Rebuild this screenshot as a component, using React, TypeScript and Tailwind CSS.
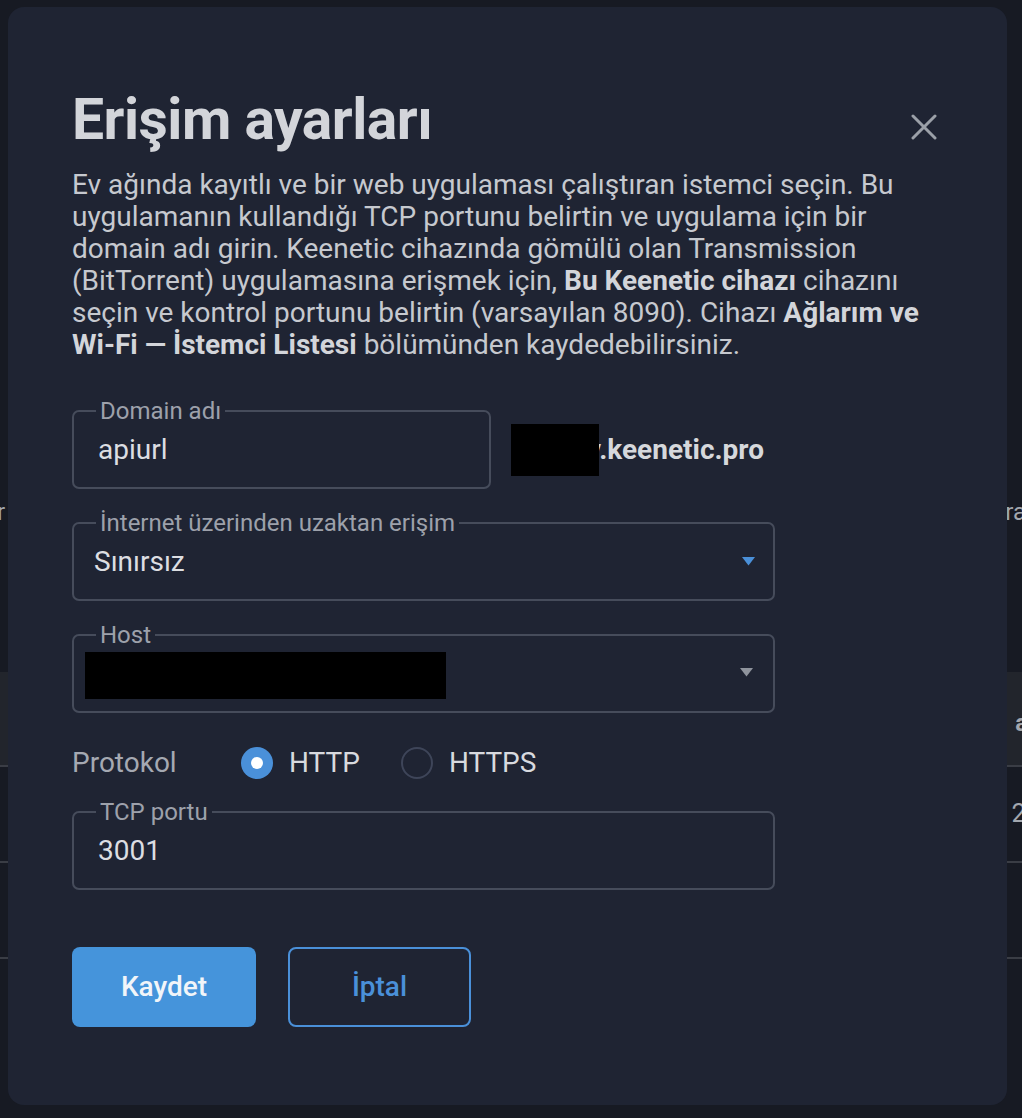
import React from "react";

function Field({
  label,
  children,
  className = "",
}: {
  label: string;
  children: React.ReactNode;
  className?: string;
}) {
  return (
    <fieldset
      className={
        "border-2 border-[#464c5b] rounded-[7px] px-0 pb-0 m-0 min-w-0 " + className
      }
    >
      <legend className="ml-[22px] px-[4px] text-[24px] leading-[24px] text-[#9da1ab]">
        {label}
      </legend>
      {children}
    </fieldset>
  );
}

function Caret({ color }: { color: string }) {
  return (
    <svg width="13" height="9" viewBox="0 0 13 9" className="shrink-0">
      <path d="M0 0 L13 0 L6.5 8.5 Z" fill={color} />
    </svg>
  );
}

export default function App() {
  return (
    <div className="relative w-[1022px] h-[1118px] overflow-hidden bg-[#171a23] font-['Roboto','Noto_Sans',sans-serif]">
      {/* page behind the dialog */}
      <div className="flex flex-col pt-[496px]">
        <div className="flex justify-between h-[32px] text-[24px] leading-[32px] text-[#a3a7ae]">
          <span className="-ml-[3px]">r</span>
          <span className="-mr-[4px]">ra</span>
        </div>
        <div className="h-[144px]" />
        <div className="flex justify-between items-center h-[95px] bg-[#22252c] border-b-2 border-[#3a3d45] text-[24px] font-bold text-[#a3a7ae]">
          <span />
          <span className="-mr-[6px] mt-[8px]">a</span>
        </div>
        <div className="flex justify-between items-start h-[96px] border-b-2 border-[#3a3d45] text-[26px] leading-[32px] text-[#a3a7ae]">
          <span />
          <span className="-mr-[4px] mt-[30px]">2</span>
        </div>
        <div className="h-[96px] border-b-2 border-[#3a3d45]" />
      </div>

      {/* dialog */}
      <div className="absolute left-[8px] top-[7px] w-[999px] h-[1098px] rounded-[16px] bg-[#1f2433] px-[64px] pt-[81px] flex flex-col">
        <div className="flex justify-between items-start">
          <h1 className="text-[57px] leading-[64px] font-bold text-[#d3d5da] tracking-[-0.5px]">
            Erişim ayarları
          </h1>
          <button className="mt-[26px] mr-[6px] w-[26px] h-[26px] flex items-center justify-center">
            <svg width="26" height="26" viewBox="0 0 26 26">
              <path
                d="M2 2 L24 24 M24 2 L2 24"
                stroke="#9ba0a8"
                strokeWidth="3"
                strokeLinecap="round"
              />
            </svg>
          </button>
        </div>

        <p className="mt-[17px] text-[28px] leading-[32px] text-[#c6c9cf]">
          Ev ağında kayıtlı ve bir web uygulaması çalıştıran istemci seçin. Bu
          uygulamanın kullandığı TCP portunu belirtin ve uygulama için bir
          domain adı girin. Keenetic cihazında gömülü olan Transmission
          (BitTorrent) uygulamasına erişmek için,{" "}
          <b className="font-bold text-[#d3d5da]">Bu Keenetic cihazı</b> cihazını
          seçin ve kontrol portunu belirtin (varsayılan 8090). Cihazı{" "}
          <b className="font-bold text-[#d3d5da]">Ağlarım ve Wi‑Fi — İstemci Listesi</b>{" "}
          bölümünden kaydedebilirsiniz.
        </p>

        <div className="mt-[38px] flex items-center">
          <Field label="Domain adı" className="w-[419px]">
            <div className="pl-[24px] pt-[11px] pb-[21px] text-[28px] leading-[32px] text-[#dcdee2]">
              apiurl
            </div>
          </Field>
          <div className="ml-[20px] mt-[12px] flex items-center">
            <div className="relative z-10 w-[88px] h-[52px] bg-black" />
            <span className="-ml-[12px] text-[28px] leading-[32px] font-bold text-[#d6d8dc]">
              v.keenetic.pro
            </span>
          </div>
        </div>

        <Field label="İnternet üzerinden uzaktan erişim" className="mt-[22px] w-[703px]">
          <div className="pl-[20px] pr-[18px] pt-[11px] pb-[21px] flex items-center justify-between">
            <span className="text-[28px] leading-[32px] text-[#dcdee2]">Sınırsız</span>
            <span className="-mt-[2px]">
              <Caret color="#4a90d9" />
            </span>
          </div>
        </Field>

        <Field label="Host" className="mt-[22px] w-[703px]">
          <div className="pl-[11px] pr-[20px] pt-[5px] pb-[12px] flex items-center justify-between">
            <div className="w-[361px] h-[47px] bg-black" />
            <span className="-mt-[6px]">
              <Caret color="#8f949d" />
            </span>
          </div>
        </Field>

        <div className="mt-[34px] flex items-center h-[32px]">
          <span className="w-[169px] text-[28px] text-[#a5a9b2]">Protokol</span>
          <div className="flex items-center">
            <span className="w-[32px] h-[32px] rounded-full bg-[#4a90d9] flex items-center justify-center">
              <span className="w-[12px] h-[12px] rounded-full bg-white" />
            </span>
            <span className="ml-[16px] text-[28px] text-[#d8dadf]">HTTP</span>
          </div>
          <div className="ml-[41px] flex items-center">
            <span className="w-[32px] h-[32px] rounded-full border-2 border-[#3e4559]" />
            <span className="ml-[16px] text-[28px] text-[#d8dadf]">HTTPS</span>
          </div>
        </div>

        <Field label="TCP portu" className="mt-[21px] w-[703px]">
          <div className="pl-[24px] pt-[11px] pb-[21px] text-[28px] leading-[32px] text-[#dcdee2]">
            3001
          </div>
        </Field>

        <div className="mt-[57px] flex gap-[32px]">
          <button className="w-[184px] h-[80px] rounded-[8px] bg-[#4594db] text-[28px] font-medium text-[#f1f5f9]">
            Kaydet
          </button>
          <button className="w-[183px] h-[80px] rounded-[8px] border-2 border-[#4a90d9] text-[28px] font-medium text-[#4a90d9]">
            İptal
          </button>
        </div>
      </div>
    </div>
  );
}
